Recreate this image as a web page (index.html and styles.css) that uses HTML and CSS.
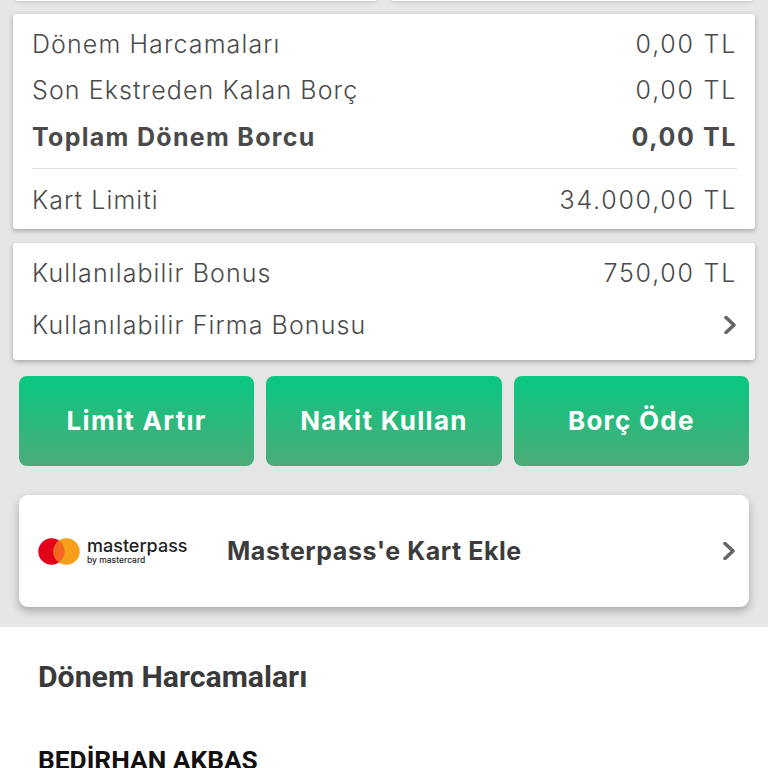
FILE: index.html
```html
<!DOCTYPE html>
<html lang="tr">
<head>
  <meta charset="UTF-8" />
  <meta name="viewport" content="width=device-width, initial-scale=1.0" />
  <title>Kart Detay</title>
  <link rel="stylesheet" href="styles.css">
</head>
<body>
  <div class="top-cards">
    <div class="top-card"></div>
    <div class="top-card"></div>
  </div>

  <div class="card summary">
    <div class="row"><span>Dönem Harcamaları</span><span class="amount">0,00 TL</span></div>
    <div class="row"><span>Son Ekstreden Kalan Borç</span><span class="amount">0,00 TL</span></div>
    <div class="row total"><span>Toplam Dönem Borcu</span><span class="amount">0,00 TL</span></div>
    <div class="divider"></div>
    <div class="row"><span>Kart Limiti</span><span class="amount">34.000,00 TL</span></div>
  </div>

  <div class="card bonus">
    <div class="row"><span>Kullanılabilir Bonus</span><span class="amount">750,00 TL</span></div>
    <div class="row firm">
      <span>Kullanılabilir Firma Bonusu</span>
      <svg class="chevron" viewBox="0 0 14 18" width="14" height="18"><path d="M3 1.5 L11 9 L3 16.5"/></svg>
    </div>
  </div>

  <div class="actions">
    <button class="action">Limit Artır</button>
    <button class="action">Nakit Kullan</button>
    <button class="action">Borç Öde</button>
  </div>

  <div class="masterpass">
    <div class="mp-logo">
      <svg viewBox="0 0 43 27" width="43" height="27">
        <circle cx="13.5" cy="13.5" r="13.2" fill="#e2001a"/>
        <circle cx="28.5" cy="13.5" r="13.2" fill="#f79e1b"/>
        <path d="M21 2.7 A13.2 13.2 0 0 1 21 24.3 A13.2 13.2 0 0 1 21 2.7 Z" fill="#f26522"/>
      </svg>
      <div class="mp-word">
        <span class="mp-name">masterpass</span>
        <span class="mp-by">by mastercard</span>
      </div>
    </div>
    <span class="mp-title">Masterpass'e Kart Ekle</span>
    <svg class="chevron" viewBox="0 0 14 18" width="14" height="18"><path d="M3 1.5 L11 9 L3 16.5"/></svg>
  </div>

  <div class="sheet">
    <h2 class="sheet-title">Dönem Harcamaları</h2>
    <div class="holder">BEDİRHAN AKBAŞ</div>
  </div>
</body>
</html>
```

FILE: styles.css
```css
html, body {
  height: 768px;
}

body {
  margin: 0;
  background: #e6e6e6;
  font-family: "Inter", sans-serif;
  color: #4a4a4a;
  overflow: hidden;
  display: flex;
  flex-direction: column;
}

body > * {
  flex: none;
}

.top-cards {
  display: flex;
  gap: 16px;
  padding: 0 16px;
  height: 1px;
  margin-bottom: 13px;
}

.top-card {
  flex: 1;
  background: #fff;
  box-shadow: 0 1px 3px rgba(0, 0, 0, 0.3);
}

.card {
  margin: 0 13px;
  padding: 0 18px 0 19px;
  background: #fff;
  border-radius: 3px;
  box-shadow: 0 2px 5px rgba(0, 0, 0, 0.28);
}

.summary {
  height: 215px;
  padding-top: 7px;
  box-sizing: border-box;
}

.row {
  display: flex;
  justify-content: space-between;
  align-items: center;
  height: 46px;
  font-size: 25px;
  font-weight: 300;
  letter-spacing: 1.1px;
}

.amount {
  letter-spacing: 1.75px;
}

.total {
  font-weight: 700;
  height: 48px;
  letter-spacing: 1.3px;
}

.total .amount {
  letter-spacing: 1.6px;
}

.divider {
  height: 1px;
  margin-top: 7px;
  background: #e2e2e2;
}

.summary .row:last-child {
  height: 61px;
}

.bonus {
  margin-top: 14px;
  height: 117px;
  box-sizing: border-box;
  padding-top: 7px;
}

.bonus .row {
  height: 46px;
}

.bonus .firm {
  height: 58px;
}

.chevron {
  flex: none;
  fill: none;
  stroke: #666;
  stroke-width: 3.6;
  stroke-linecap: round;
  stroke-linejoin: round;
}

.actions {
  display: flex;
  gap: 12px;
  margin: 16px 19px 0;
}

.action {
  flex: 1;
  height: 90px;
  border: 0;
  border-radius: 8px;
  background: linear-gradient(#08c882, #4cab78);
  color: #fff;
  font-family: "Inter", sans-serif;
  font-size: 26px;
  font-weight: 700;
  letter-spacing: 1.3px;
  padding: 0 0 2px;
}

.masterpass {
  display: flex;
  align-items: center;
  height: 112px;
  margin: 29px 19px 0;
  padding: 0 13px 0 19px;
  background: #fff;
  border-radius: 9px;
  box-shadow: 0 4px 10px rgba(0, 0, 0, 0.28);
}

.mp-logo {
  display: flex;
  align-items: center;
  gap: 6px;
  width: 189px;
  flex: none;
}

.mp-word {
  display: flex;
  flex-direction: column;
  color: #222;
}

.mp-name {
  font-size: 18px;
  font-weight: 500;
  line-height: 16px;
}

.mp-by {
  margin-top: 2px;
  font-size: 8.5px;
  font-weight: 500;
  line-height: 8px;
}

.mp-title {
  flex: 1;
  font-size: 25px;
  font-weight: 700;
  letter-spacing: 0.55px;
  color: #3c3c3c;
}

.sheet {
  flex: 1;
  min-height: 0;
  margin-top: 20px;
  padding: 30px 38px 0;
  background: #fff;
  font-family: "Roboto", sans-serif;
}

.sheet-title {
  margin: 0;
  font-size: 30.2px;
  line-height: 40px;
  font-weight: 700;
  color: #3a3a3a;
}

.holder {
  margin-top: 48px;
  font-size: 26.3px;
  line-height: 30px;
  font-weight: 700;
  color: #111;
}
```
